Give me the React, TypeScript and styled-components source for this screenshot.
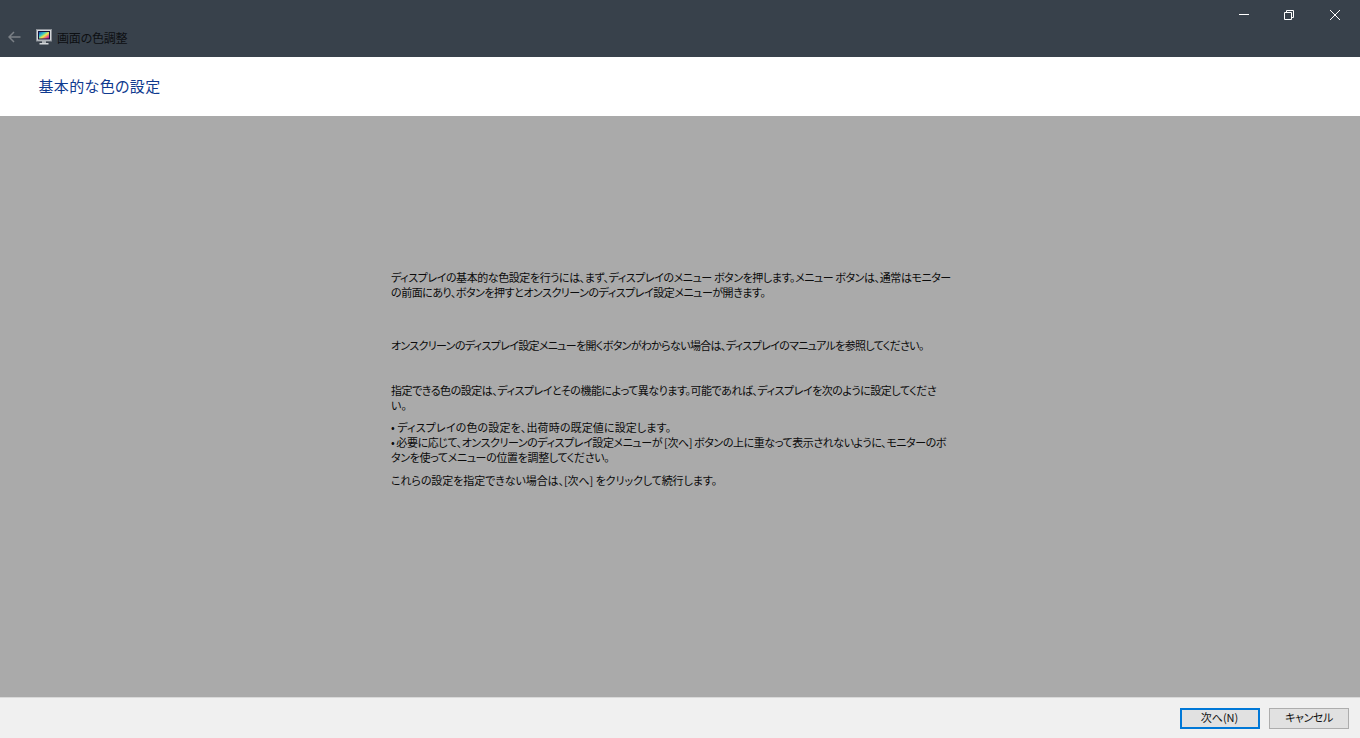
import React from 'react';
import styled, { createGlobalStyle } from 'styled-components';

const GlobalStyle = createGlobalStyle`
  html, body {
    margin: 0;
    padding: 0;
    height: 100%;
    overflow: hidden;
  }
  body {
    font-family: 'Noto Sans CJK JP', 'Liberation Sans', sans-serif;
    font-feature-settings: 'palt';
  }
`;

const Window = styled.div`
  display: flex;
  flex-direction: column;
  width: 1360px;
  height: 738px;
`;

const TitleBar = styled.header`
  display: flex;
  flex: 0 0 57px;
  justify-content: space-between;
  background: #38414b;
`;

const TitleLeft = styled.div`
  display: flex;
  align-items: center;
  align-self: flex-end;
  height: 40px;
  padding-left: 8px;
`;

const BackButton = styled.div`
  display: flex;
  width: 28px;
`;

const TitleText = styled.span`
  margin-left: 5px;
  font-size: 12px;
  letter-spacing: -0.2px;
  color: #0d0f12;
`;

const WindowButtons = styled.div`
  display: flex;
  align-self: flex-start;
  padding-right: 2.6px;
`;

const WindowButton = styled.div`
  display: flex;
  align-items: center;
  justify-content: center;
  width: 45.4px;
  height: 29px;
`;

const HeaderBand = styled.div`
  display: flex;
  flex: 0 0 59px;
  align-items: center;
  padding: 0 0 2px 38.5px;
  box-sizing: border-box;
  background: #fff;
`;

const Heading = styled.h1`
  margin: 0;
  font-size: 15px;
  font-weight: 400;
  letter-spacing: 0.35px;
  color: #0f3a8f;
`;

const Content = styled.main`
  flex: 1;
  padding: 154px 0 0 391px;
  background: #aaaaaa;
`;

const Paragraph = styled.div<{ $gap: number }>`
  margin-bottom: ${p => p.$gap}px;
  font-size: 11px;
  line-height: 15px;
  white-space: nowrap;
  color: #0b0b0b;
`;

const Line = styled.div<{ $tracking: number }>`
  letter-spacing: ${p => p.$tracking}px;
`;

const Footer = styled.footer`
  display: flex;
  flex: 0 0 41px;
  justify-content: flex-end;
  gap: 9px;
  padding: 10px 11px 0 0;
  box-sizing: border-box;
  border-top: 1px solid #d9d9d9;
  background: #f0f0f0;
`;

const Button = styled.button<{ $primary?: boolean }>`
  width: 80px;
  height: 21px;
  padding: 0 ${p => (p.$primary ? '1px' : '0')} 2px 0;
  box-sizing: border-box;
  border: ${p => (p.$primary ? '2px solid #0078d7' : '1px solid #adadad')};
  background: #e1e1e1;
  font-family: inherit;
  font-feature-settings: inherit;
  font-size: 11px;
  line-height: 1;
  letter-spacing: ${p => (p.$primary ? '0' : '-0.4px')};
  color: #111;
`;

const MonitorIcon = () => (
  <svg width="16" height="16" viewBox="0 0 16 16">
    <defs>
      <linearGradient id="spectrum" x1="0" y1="0" x2="1" y2="1">
        <stop offset="0" stopColor="#1d2fb8" />
        <stop offset="0.35" stopColor="#2fc4c8" />
        <stop offset="0.55" stopColor="#efe94a" />
        <stop offset="0.8" stopColor="#e2388a" />
        <stop offset="1" stopColor="#5a1580" />
      </linearGradient>
    </defs>
    <rect x="0.5" y="0.5" width="15" height="11.5" fill="#d4d7da" stroke="#8b9097" />
    <rect x="2.5" y="2.5" width="11" height="7.5" fill="url(#spectrum)" stroke="#14143c" />
    <rect x="6" y="12" width="4" height="2" fill="#aeb2b6" />
    <rect x="3.5" y="14" width="9" height="1.5" fill="#d4d7da" />
  </svg>
);

const App = () => (
  <Window>
    <GlobalStyle />
    <TitleBar>
      <TitleLeft>
        <BackButton>
          <svg width="13" height="12" viewBox="0 0 13 12" fill="none" stroke="#7b8086" strokeWidth="1.5">
            <path d="M12.5 6H1.5M6 1L1 6l5 5" />
          </svg>
        </BackButton>
        <MonitorIcon />
        <TitleText>画面の色調整</TitleText>
      </TitleLeft>
      <WindowButtons>
        <WindowButton>
          <svg width="10" height="10" viewBox="0 0 10 10" stroke="#fff" strokeWidth="1">
            <path d="M0 4.5h10" />
          </svg>
        </WindowButton>
        <WindowButton>
          <svg width="10" height="10" viewBox="0 0 10 10" fill="none" stroke="#fff" strokeWidth="1">
            <path d="M0.5 2.5h7v7h-7zM2.5 2.5v-2h7v7h-2" />
          </svg>
        </WindowButton>
        <WindowButton>
          <svg width="10" height="10" viewBox="0 0 10 10" stroke="#fff" strokeWidth="1">
            <path d="M0 0l10 10M10 0L0 10" />
          </svg>
        </WindowButton>
      </WindowButtons>
    </TitleBar>
    <HeaderBand>
      <Heading>基本的な色の設定</Heading>
    </HeaderBand>
    <Content>
      <Paragraph $gap={38}>
        <Line $tracking={-0.42}>ディスプレイの基本的な色設定を行うには、まず、ディスプレイのメニュー ボタンを押します。メニュー ボタンは、通常はモニター</Line>
        <Line $tracking={-0.47}>の前面にあり、ボタンを押すとオンスクリーンのディスプレイ設定メニューが開きます。</Line>
      </Paragraph>
      <Paragraph $gap={30}>
        <Line $tracking={-0.67}>オンスクリーンのディスプレイ設定メニューを開くボタンがわからない場合は、ディスプレイのマニュアルを参照してください。</Line>
      </Paragraph>
      <Paragraph $gap={7}>
        <Line $tracking={-0.47}>指定できる色の設定は、ディスプレイとその機能によって異なります。可能であれば、ディスプレイを次のように設定してくださ</Line>
        <Line $tracking={-0.12}>い。</Line>
      </Paragraph>
      <Paragraph $gap={8}>
        <Line $tracking={0.13}>• ディスプレイの色の設定を、出荷時の既定値に設定します。</Line>
        <Line $tracking={-0.42}>• 必要に応じて、オンスクリーンのディスプレイ設定メニューが [次へ] ボタンの上に重なって表示されないように、モニターのボ</Line>
        <Line $tracking={-0.36}>タンを使ってメニューの位置を調整してください。</Line>
      </Paragraph>
      <Paragraph $gap={0}>
        <Line $tracking={-0.08}>これらの設定を指定できない場合は、[次へ] をクリックして続行します。</Line>
      </Paragraph>
    </Content>
    <Footer>
      <Button $primary>次へ(N)</Button>
      <Button>キャンセル</Button>
    </Footer>
  </Window>
);

export default App;
